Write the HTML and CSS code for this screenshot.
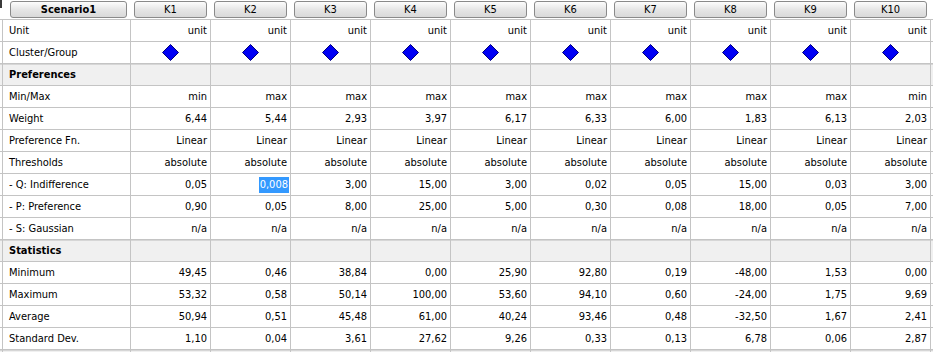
FILE: index.html
```html
<!DOCTYPE html>
<html lang="en">
<head>
    <meta charset="UTF-8">
    <title>Scenario1 - Criteria</title>
    <link rel="stylesheet" href="styles.css">
</head>
<body>

<div class="sheet">

    <!-- Cabecera con botones -->
    <div class="head">
        <span class="corner"></span>
        <button class="hbtn first">Scenario1</button>
        <button class="hbtn">K1</button>
        <button class="hbtn">K2</button>
        <button class="hbtn">K3</button>
        <button class="hbtn">K4</button>
        <button class="hbtn">K5</button>
        <button class="hbtn">K6</button>
        <button class="hbtn">K7</button>
        <button class="hbtn">K8</button>
        <button class="hbtn">K9</button>
        <button class="hbtn">K10</button>
    </div>

    <div class="row">
        <div class="gut"></div><div class="lbl">Unit</div>
        <div class="c">unit</div><div class="c">unit</div><div class="c">unit</div><div class="c">unit</div><div class="c">unit</div>
        <div class="c">unit</div><div class="c">unit</div><div class="c">unit</div><div class="c">unit</div><div class="c">unit</div>
        <div class="end"></div>
    </div>

    <div class="row">
        <div class="gut"></div><div class="lbl">Cluster/Group</div>
        <div class="c mid"><svg class="dia" viewBox="0 0 17 17"><polygon points="8.5,0.5 16.5,8.5 8.5,16.5 0.5,8.5"/></svg></div>
        <div class="c mid"><svg class="dia" viewBox="0 0 17 17"><polygon points="8.5,0.5 16.5,8.5 8.5,16.5 0.5,8.5"/></svg></div>
        <div class="c mid"><svg class="dia" viewBox="0 0 17 17"><polygon points="8.5,0.5 16.5,8.5 8.5,16.5 0.5,8.5"/></svg></div>
        <div class="c mid"><svg class="dia" viewBox="0 0 17 17"><polygon points="8.5,0.5 16.5,8.5 8.5,16.5 0.5,8.5"/></svg></div>
        <div class="c mid"><svg class="dia" viewBox="0 0 17 17"><polygon points="8.5,0.5 16.5,8.5 8.5,16.5 0.5,8.5"/></svg></div>
        <div class="c mid"><svg class="dia" viewBox="0 0 17 17"><polygon points="8.5,0.5 16.5,8.5 8.5,16.5 0.5,8.5"/></svg></div>
        <div class="c mid"><svg class="dia" viewBox="0 0 17 17"><polygon points="8.5,0.5 16.5,8.5 8.5,16.5 0.5,8.5"/></svg></div>
        <div class="c mid"><svg class="dia" viewBox="0 0 17 17"><polygon points="8.5,0.5 16.5,8.5 8.5,16.5 0.5,8.5"/></svg></div>
        <div class="c mid"><svg class="dia" viewBox="0 0 17 17"><polygon points="8.5,0.5 16.5,8.5 8.5,16.5 0.5,8.5"/></svg></div>
        <div class="c mid"><svg class="dia" viewBox="0 0 17 17"><polygon points="8.5,0.5 16.5,8.5 8.5,16.5 0.5,8.5"/></svg></div>
        <div class="end"></div>
    </div>

    <!-- Preferencias -->
    <div class="row section">
        <div class="gut"></div><div class="lbl">Preferences</div>
        <div class="c"></div><div class="c"></div><div class="c"></div><div class="c"></div><div class="c"></div>
        <div class="c"></div><div class="c"></div><div class="c"></div><div class="c"></div><div class="c"></div>
        <div class="end"></div>
    </div>

    <div class="row">
        <div class="gut"></div><div class="lbl">Min/Max</div>
        <div class="c">min</div><div class="c">max</div><div class="c">max</div><div class="c">max</div><div class="c">max</div>
        <div class="c">max</div><div class="c">max</div><div class="c">max</div><div class="c">max</div><div class="c">min</div>
        <div class="end"></div>
    </div>

    <div class="row">
        <div class="gut"></div><div class="lbl">Weight</div>
        <div class="c">6,44</div><div class="c">5,44</div><div class="c">2,93</div><div class="c">3,97</div><div class="c">6,17</div>
        <div class="c">6,33</div><div class="c">6,00</div><div class="c">1,83</div><div class="c">6,13</div><div class="c">2,03</div>
        <div class="end"></div>
    </div>

    <div class="row">
        <div class="gut"></div><div class="lbl">Preference Fn.</div>
        <div class="c">Linear</div><div class="c">Linear</div><div class="c">Linear</div><div class="c">Linear</div><div class="c">Linear</div>
        <div class="c">Linear</div><div class="c">Linear</div><div class="c">Linear</div><div class="c">Linear</div><div class="c">Linear</div>
        <div class="end"></div>
    </div>

    <div class="row">
        <div class="gut"></div><div class="lbl">Thresholds</div>
        <div class="c">absolute</div><div class="c">absolute</div><div class="c">absolute</div><div class="c">absolute</div><div class="c">absolute</div>
        <div class="c">absolute</div><div class="c">absolute</div><div class="c">absolute</div><div class="c">absolute</div><div class="c">absolute</div>
        <div class="end"></div>
    </div>

    <div class="row">
        <div class="gut"></div><div class="lbl">- Q: Indifference</div>
        <div class="c">0,05</div>
        <div class="c"><span class="sel">0,008</span></div>
        <div class="c">3,00</div><div class="c">15,00</div><div class="c">3,00</div>
        <div class="c">0,02</div><div class="c">0,05</div><div class="c">15,00</div><div class="c">0,03</div><div class="c">3,00</div>
        <div class="end"></div>
    </div>

    <div class="row">
        <div class="gut"></div><div class="lbl">- P: Preference</div>
        <div class="c">0,90</div><div class="c">0,05</div><div class="c">8,00</div><div class="c">25,00</div><div class="c">5,00</div>
        <div class="c">0,30</div><div class="c">0,08</div><div class="c">18,00</div><div class="c">0,05</div><div class="c">7,00</div>
        <div class="end"></div>
    </div>

    <div class="row">
        <div class="gut"></div><div class="lbl">- S: Gaussian</div>
        <div class="c">n/a</div><div class="c">n/a</div><div class="c">n/a</div><div class="c">n/a</div><div class="c">n/a</div>
        <div class="c">n/a</div><div class="c">n/a</div><div class="c">n/a</div><div class="c">n/a</div><div class="c">n/a</div>
        <div class="end"></div>
    </div>

    <!-- Estadisticas -->
    <div class="row section">
        <div class="gut"></div><div class="lbl">Statistics</div>
        <div class="c"></div><div class="c"></div><div class="c"></div><div class="c"></div><div class="c"></div>
        <div class="c"></div><div class="c"></div><div class="c"></div><div class="c"></div><div class="c"></div>
        <div class="end"></div>
    </div>

    <div class="row">
        <div class="gut"></div><div class="lbl">Minimum</div>
        <div class="c">49,45</div><div class="c">0,46</div><div class="c">38,84</div><div class="c">0,00</div><div class="c">25,90</div>
        <div class="c">92,80</div><div class="c">0,19</div><div class="c">-48,00</div><div class="c">1,53</div><div class="c">0,00</div>
        <div class="end"></div>
    </div>

    <div class="row">
        <div class="gut"></div><div class="lbl">Maximum</div>
        <div class="c">53,32</div><div class="c">0,58</div><div class="c">50,14</div><div class="c">100,00</div><div class="c">53,60</div>
        <div class="c">94,10</div><div class="c">0,60</div><div class="c">-24,00</div><div class="c">1,75</div><div class="c">9,69</div>
        <div class="end"></div>
    </div>

    <div class="row">
        <div class="gut"></div><div class="lbl">Average</div>
        <div class="c">50,94</div><div class="c">0,51</div><div class="c">45,48</div><div class="c">61,00</div><div class="c">40,24</div>
        <div class="c">93,46</div><div class="c">0,48</div><div class="c">-32,50</div><div class="c">1,67</div><div class="c">2,41</div>
        <div class="end"></div>
    </div>

    <div class="row">
        <div class="gut"></div><div class="lbl">Standard Dev.</div>
        <div class="c">1,10</div><div class="c">0,04</div><div class="c">3,61</div><div class="c">27,62</div><div class="c">9,26</div>
        <div class="c">0,33</div><div class="c">0,13</div><div class="c">6,78</div><div class="c">0,06</div><div class="c">2,87</div>
        <div class="end"></div>
    </div>

    <div class="row section">
        <div class="gut"></div><div class="lbl"></div>
        <div class="c"></div><div class="c"></div><div class="c"></div><div class="c"></div><div class="c"></div>
        <div class="c"></div><div class="c"></div><div class="c"></div><div class="c"></div><div class="c"></div>
        <div class="end"></div>
    </div>

</div>

</body>
</html>
```

FILE: styles.css
```css
body { margin: 0; font-family: "DejaVu Sans Condensed", "Liberation Sans", sans-serif; font-size: 11px; color: #000; background: #fff; }

.sheet { display: grid; grid-template-columns: 2px 127px repeat(10, 79px) 1fr; grid-template-rows: 19px repeat(16, 21px); gap: 1px; background-color: #c4c4c4; height: 352px; overflow: hidden; }

/* Cabecera */
.head { grid-column: 1 / -1; display: flex; align-items: center; gap: 7px; padding-left: 10px; background-color: #fff; position: relative; }
.corner { position: absolute; left: 0; top: 0; width: 2px; height: 8px; background-color: #3a3a3a; }
.hbtn { height: 17px; width: 73px; padding: 0; border: 1px solid #8a8a8a; border-radius: 3px; background: linear-gradient(#fdfdfd, #e6e6e6 50%, #d9d9d9); font-family: inherit; font-size: 11px; color: #000; line-height: 15px; }
.hbtn.first { width: 117px; font-weight: bold; }

/* Filas */
.row { display: contents; }
.row > div { background-color: #fff; line-height: 21px; white-space: nowrap; overflow: hidden; }
.lbl { padding-left: 6px; }
.c { text-align: right; padding-right: 3px; }
.c.mid { text-align: center; padding-right: 0; display: flex; align-items: center; justify-content: center; }
.dia { width: 17px; height: 17px; }
.dia polygon { fill: #0000f5; stroke: #00007a; stroke-width: 1; }

.row.section > div { background-color: #f0f0f0; box-shadow: inset 0 1px #d6d6d6; }
.row.section .lbl { font-weight: bold; }

/* Celda en edicion */
.sel { display: inline-block; height: 16px; line-height: 16px; padding: 0 1px; margin-right: -2px; background-color: #3399ff; color: #fff; vertical-align: middle; }
```
